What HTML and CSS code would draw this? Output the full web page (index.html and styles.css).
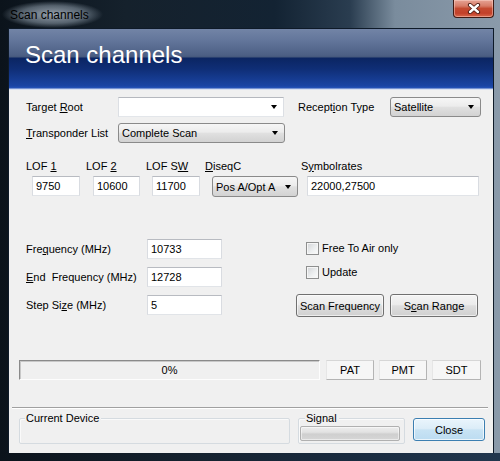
FILE: index.html
```html
<!DOCTYPE html>
<html>
<head>
<meta charset="utf-8">
<title>Scan channels</title>
<link rel="stylesheet" href="styles.css">
</head>
<body>
<div class="window">
  <div class="titlebar">
    <span class="title">Scan channels</span>
    <div class="closebtn">
      <svg width="14" height="11" viewBox="0 0 14 11"><path d="M3 2 L11 9 M11 2 L3 9" stroke="#4a1a12" stroke-width="4.2" stroke-linecap="round"/><path d="M3 2 L11 9 M11 2 L3 9" stroke="#ffffff" stroke-width="2.4" stroke-linecap="round"/></svg>
    </div>
  </div>
  <div class="client">
    <div class="header"><h1>Scan channels</h1></div>
    <div class="content">
      <div class="form">
        <div class="row">
          <span class="lbl lbl-a">Target <u>R</u>oot</span>
          <div class="combo edit w-root"><span></span><i class="arrow"></i></div>
          <span class="lbl lbl-rt">Recept<u>i</u>on Type</span>
          <div class="combo w-rec"><span>Satellite</span><i class="arrow"></i></div>
        </div>
        <div class="row row2">
          <span class="lbl lbl-a"><u>T</u>ransponder List</span>
          <div class="combo w-tr"><span>Complete Scan</span><i class="arrow"></i></div>
        </div>
        <div class="lof-labels">
          <span class="lbl l1">LOF <u>1</u></span>
          <span class="lbl l2">LOF <u>2</u></span>
          <span class="lbl l3">LOF S<u>W</u></span>
          <span class="lbl l4"><u>D</u>iseqC</span>
          <span class="lbl">S<u>y</u>mbolrates</span>
        </div>
        <div class="lof-inputs">
          <div class="input i1">9750</div>
          <div class="input i2">10600</div>
          <div class="input i3">11700</div>
          <div class="combo i4"><span>Pos A/Opt A</span><i class="arrow"></i></div>
          <div class="input i5">22000,27500</div>
        </div>
        <div class="freq">
          <div class="freq-left">
            <div class="frow"><span class="lbl fl">Fre<u>q</u>uency (MHz)</span><div class="input fi">10733</div></div>
            <div class="frow"><span class="lbl fl"><u>E</u>nd&nbsp; Frequency (MHz)</span><div class="input fi">12728</div></div>
            <div class="frow"><span class="lbl fl">Step Si<u>z</u>e (MHz)</span><div class="input fi">5</div></div>
          </div>
          <div class="freq-right">
            <div class="cbrow"><span class="cb"></span><span class="lbl">Free To Air only</span></div>
            <div class="cbrow cb2"><span class="cb"></span><span class="lbl">Update</span></div>
            <div class="btnrow">
              <div class="btn">Scan Frequency</div>
              <div class="btn">S<u>c</u>an Range</div>
            </div>
          </div>
        </div>
      </div>
      <div class="progress-row">
        <div class="progress">0%</div>
        <div class="flat pat">PAT</div>
        <div class="flat pmt">PMT</div>
        <div class="flat sdt">SDT</div>
      </div>
      <div class="separator"></div>
      <div class="status">
        <div class="group g-dev"><span class="gtitle">Current Device</span></div>
        <div class="group g-sig"><span class="gtitle">Signal</span><div class="sigbar"></div></div>
        <div class="closebutton">Close</div>
      </div>
    </div>
  </div>
  <div class="bottomframe"></div>
</div>
</body>
</html>
```
FILE: styles.css
```css
* { box-sizing: border-box; }
html, body { margin: 0; padding: 0; }
body {
  width: 500px;
  height: 461px;
  overflow: hidden;
  font-family: "Liberation Sans", Arial, sans-serif;
  font-size: 11px;
  color: #000;
  background: #000;
}
.window {
  width: 500px;
  height: 461px;
  display: flex;
  flex-direction: column;
  background: linear-gradient(to right, #0b131b 0%, #15212c 25%, #132333 55%, #2a3d50 70%, #7a8c9d 79%, #8a9aaa 100%);
}
.titlebar {
  height: 28px;
  display: flex;
  align-items: flex-start;
  flex: none;
}
.title {
  margin: 1px 0 0 2px;
  padding: 7px 14px 6px 8px;
  font-size: 12px;
  line-height: 14px;
  color: #000;
  background: radial-gradient(closest-side, rgba(185,196,208,0.8), rgba(155,170,184,0.5) 65%, rgba(150,165,180,0));
}
.closebtn {
  margin-left: auto;
  margin-right: 6px;
  width: 41px;
  height: 18px;
  border: 1px solid #3e1a14;
  border-top: none;
  border-radius: 0 0 4px 4px;
  background: linear-gradient(#e6a394 0%, #d77c68 35%, #c44a30 50%, #c2402a 78%, #d8684c 100%);
  box-shadow: inset 0 0 0 1px rgba(255,220,210,0.45);
  display: flex;
  align-items: center;
  justify-content: center;
}
.client {
  flex: 1;
  margin: 0 6px 0 8px;
  border: 1px solid #0e1a28;
  border-bottom: none;
  display: flex;
  flex-direction: column;
  min-height: 0;
}
.header {
  height: 61px;
  flex: none;
  background: linear-gradient(to bottom, #7284a6 0px, #62759a 12px, #4d6085 26px, #45587c 28px, #0b2562 29px, #0f2e76 40px, #1a45a4 57px, #2553b8 59px, #c6d2ea 60px, #e6ecf6 61px);
}
.header h1 {
  margin: 0;
  padding: 12px 0 0 16px;
  font-size: 24px;
  line-height: 28px;
  font-weight: normal;
  color: #fff;
}
.content {
  flex: 1;
  background: #f0f0f0;
  padding: 7px 0 0 10px;
  min-height: 0;
}
.form { margin-left: 7px; }
.lbl { white-space: nowrap; line-height: 13px; }
u { text-decoration: underline; text-underline-offset: 1px; }
.row { display: flex; align-items: center; height: 20px; }
.row2 { margin-top: 6px; }
.lbl-a { width: 92px; }
.lbl-rt { width: 92px; margin-left: 14px; }
.combo {
  height: 20px;
  border: 1px solid #8a8a8a;
  border-radius: 3px;
  background: linear-gradient(#f6f6f6 0%, #ececec 45%, #e0e0e0 52%, #d2d2d2 100%);
  display: flex;
  align-items: center;
  justify-content: space-between;
  padding: 0 6px 0 3px;
  white-space: nowrap;
}
.combo.edit {
  background: #fff;
  border-radius: 0;
  border-color: #b5b8be #dcdfe4 #e3e6ea #dcdfe4;
}
.arrow {
  width: 0;
  height: 0;
  border-left: 3.5px solid transparent;
  border-right: 3.5px solid transparent;
  border-top: 4px solid #000;
  flex: none;
}
.w-root { width: 166px; }
.w-rec { width: 91px; }
.w-tr { width: 167px; }
.lof-labels { display: flex; margin-top: 17px; height: 13px; }
.l1, .l2 { width: 60px; }
.l3 { width: 59px; }
.l4 { width: 96px; }
.lof-inputs { display: flex; margin-top: 3px; margin-left: 6px; }
.input {
  height: 20px;
  background: #fff;
  border: 1px solid #c6c8cd;
  border-color: #b8bbc1 #d9dce1 #e1e4e8 #d9dce1;
  padding-left: 3px;
  display: flex;
  align-items: center;
  white-space: nowrap;
}
.i1 { width: 48px; }
.i2 { width: 47px; margin-left: 13px; }
.i3 { width: 48px; margin-left: 12px; }
.i4 { width: 86px; margin-left: 12px; height: 21px; }
.i5 { width: 172px; margin-left: 9px; }
.freq { display: flex; margin-top: 42px; }
.freq-left { width: 270px; }
.frow { display: flex; align-items: center; height: 20px; }
.frow + .frow { margin-top: 8px; }
.fl { width: 121px; }
.fi { width: 75px; }
.freq-right { padding-top: 3px; }
.cbrow { display: flex; align-items: center; height: 13px; margin-left: 10px; }
.cb2 { margin-top: 11px; }
.cb {
  width: 13px;
  height: 13px;
  border: 1px solid #8e8f8f;
  background: linear-gradient(135deg, #d2d4d7 0%, #eef0f1 60%, #fbfbfb 100%);
  box-shadow: inset 0 0 0 1px #f6f6f6;
  margin-right: 3px;
  flex: none;
}
.btnrow { display: flex; margin-top: 15px; }
.btn {
  width: 88px;
  height: 23px;
  border: 1px solid #707070;
  border-radius: 3px;
  background: linear-gradient(#f4f4f4 0%, #ececec 45%, #dedede 52%, #d0d0d0 100%);
  box-shadow: inset 0 0 0 1px rgba(255,255,255,0.6);
  display: flex;
  align-items: center;
  justify-content: center;
  white-space: nowrap;
}
.btn + .btn { margin-left: 6px; }
.progress-row { display: flex; margin-top: 43px; height: 20px; }
.progress {
  width: 301px;
  height: 20px;
  border-top: 1px solid #8a8a8a;
  border-left: 1px solid #8a8a8a;
  border-right: 1px solid #fdfdfd;
  border-bottom: 1px solid #fdfdfd;
  box-shadow: inset 1px 1px 0 #c8c8c8;
  display: flex;
  align-items: center;
  justify-content: center;
}
.flat {
  height: 20px;
  width: 48px;
  border: 1px solid #c8c8c8;
  border-color: #d6d6d6 #b4b4b4 #b4b4b4 #e6e6e6;
  background: #f6f6f6;
  display: flex;
  align-items: center;
  justify-content: center;
}
.pat { margin-left: 6px; }
.pmt { margin-left: 5px; }
.sdt { margin-left: 5px; width: 49px; }
.separator {
  margin-top: 27px;
  margin-left: -7px;
  width: 476px;
  height: 2px;
  border-top: 1px solid #a0a0a0;
  border-bottom: 1px solid #ffffff;
}
.status { display: flex; align-items: flex-start; margin-top: 9px; }
.group {
  height: 26px;
  border: 1px solid #d5dbe0;
  border-radius: 2px;
  box-shadow: inset 1px 1px 0 #fafafa;
}
.gtitle {
  display: inline-block;
  margin-top: -7px;
  margin-left: 5px;
  padding: 0 2px 0 1px;
  line-height: 13px;
  background: #f0f0f0;
  vertical-align: top;
}
.g-dev { width: 271px; }
.g-sig { width: 107px; margin-left: 8px; }
.g-sig .gtitle { margin-left: 6px; display: block; width: max-content; }
.sigbar {
  margin-left: 1px;
  margin-top: 1px;
  width: 100px;
  height: 15px;
  border: 1px solid #b0b0b0;
  border-radius: 2px;
  background: linear-gradient(#eeeeee 0%, #e2e2e2 40%, #cfcfcf 55%, #d6d6d6 100%);
  box-shadow: inset 0 0 0 1px rgba(255,255,255,0.5);
}
.closebutton {
  margin-left: 8px;
  margin-top: 0;
  width: 72px;
  height: 23px;
  border: 1px solid #3c7fb1;
  border-radius: 3px;
  background: linear-gradient(#eaf5fc 0%, #dcedf8 45%, #c8e3f4 52%, #bcdcf1 100%);
  box-shadow: inset 0 0 0 1px rgba(255,255,255,0.7);
  display: flex;
  align-items: center;
  justify-content: center;
}
.bottomframe {
  height: 8px;
  flex: none;
  background: linear-gradient(to right, #0b131b 0%, #15222f 40%, #1a2b3f 70%, #22374e 100%);
}
```
